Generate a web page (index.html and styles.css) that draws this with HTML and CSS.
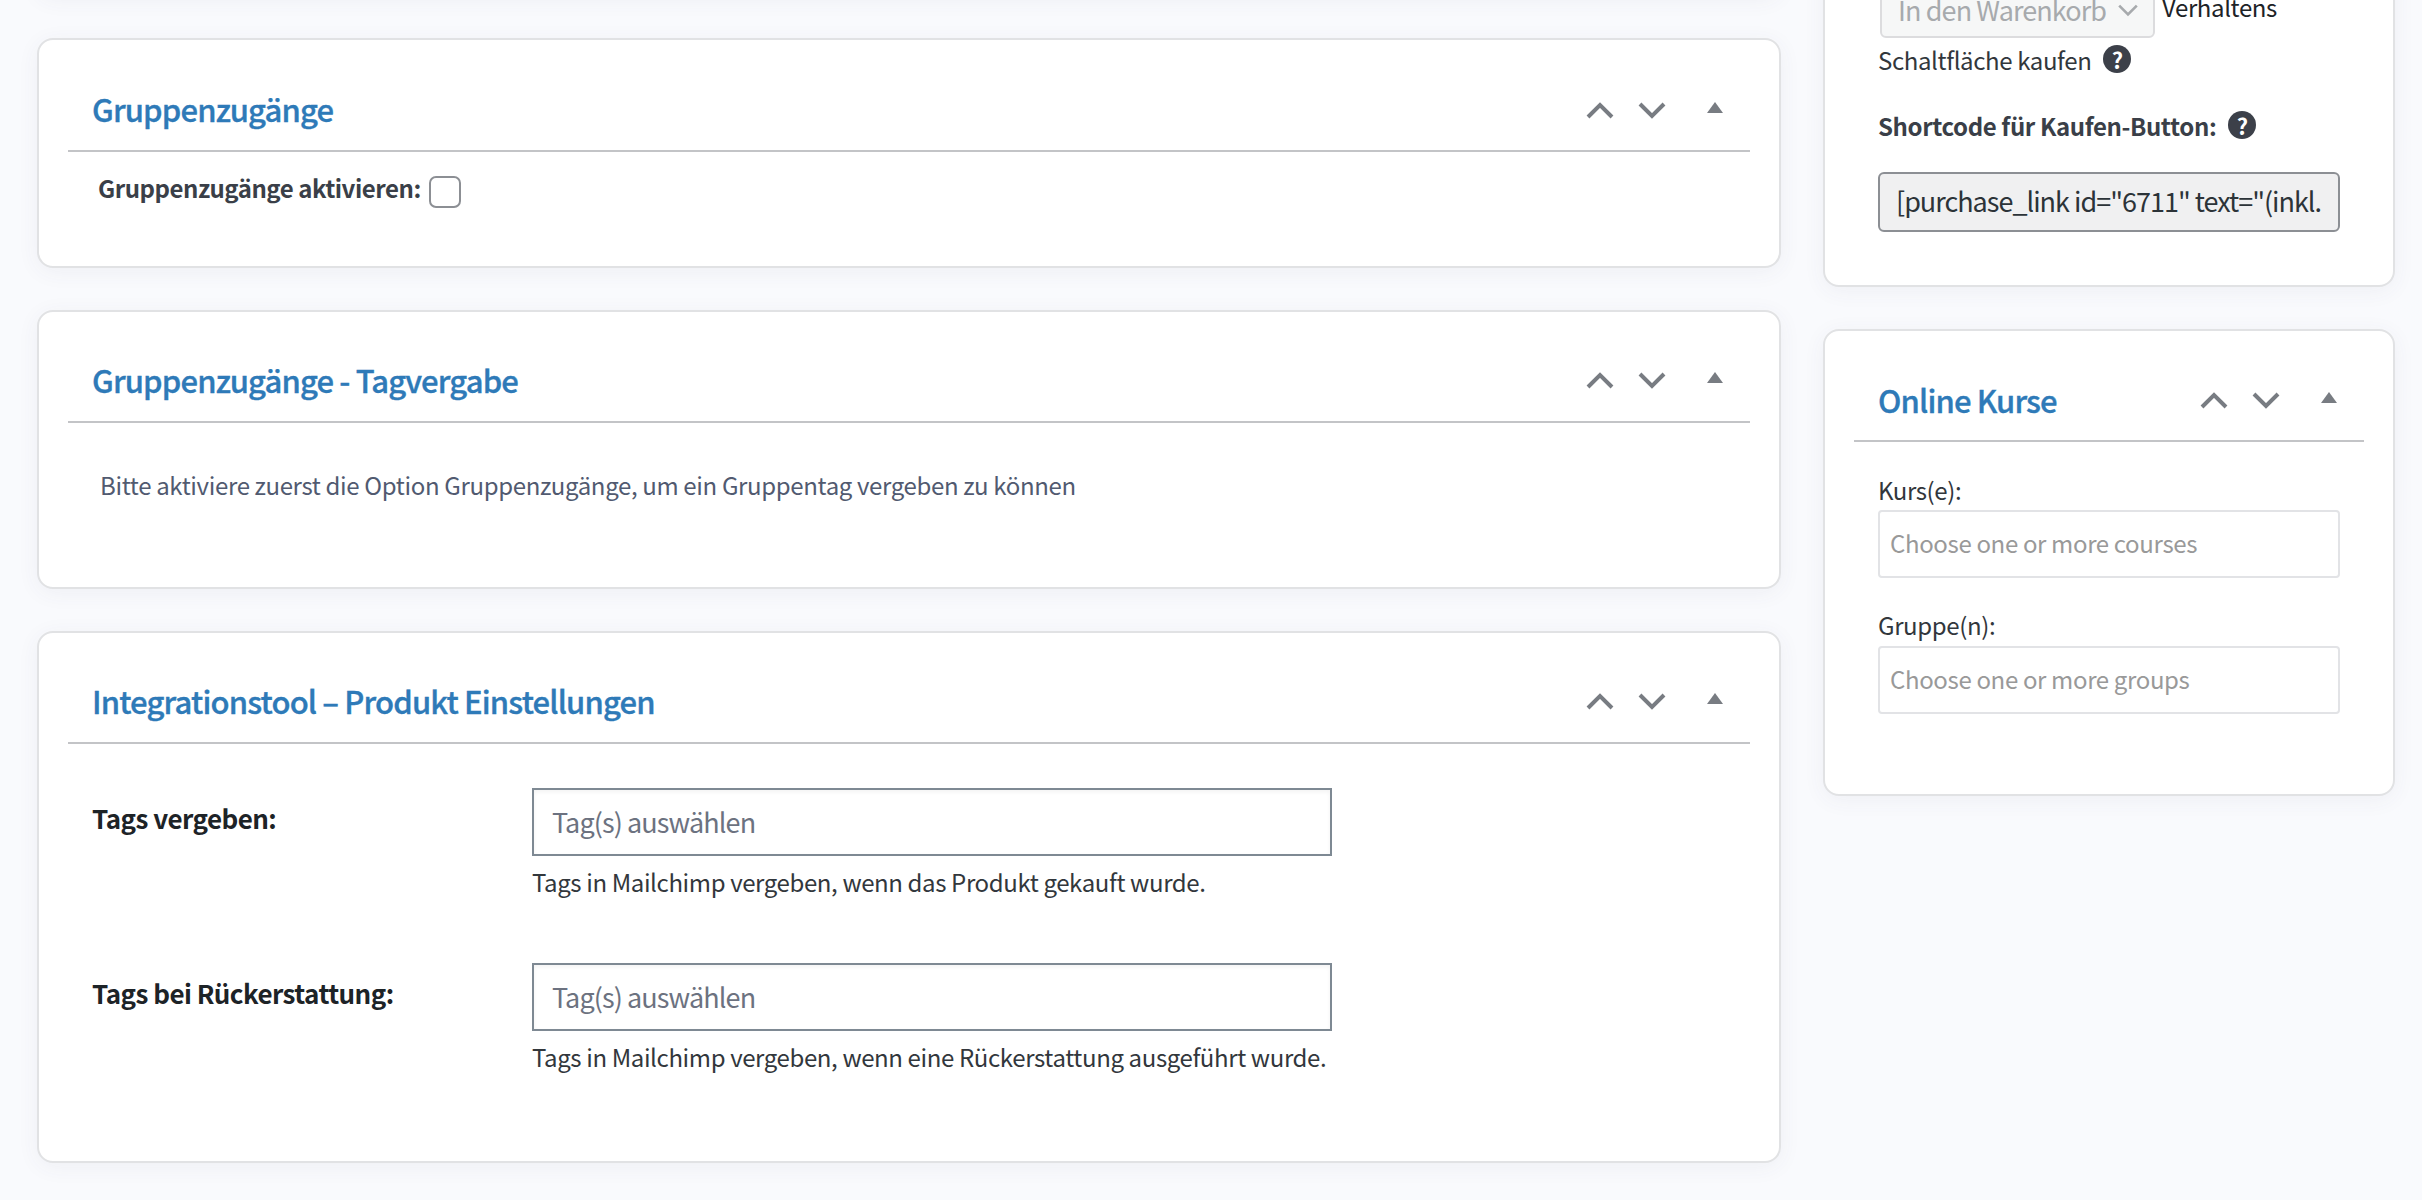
FILE: index.html
```html
<!DOCTYPE html>
<html lang="de">
<head>
<meta charset="utf-8">
<title>Produkt bearbeiten</title>
<link rel="stylesheet" href="styles.css">
</head>
<body>
<svg class="defs" width="0" height="0" aria-hidden="true">
  <symbol id="up" viewBox="0 0 28 17"><path d="M2 15 14 3l12 12" fill="none" stroke="currentColor" stroke-width="4"/></symbol>
  <symbol id="down" viewBox="0 0 28 17"><path d="M2 2l12 12L26 2" fill="none" stroke="currentColor" stroke-width="4"/></symbol>
  <symbol id="tri" viewBox="0 0 16 11"><path d="M8 0l8 11H0z" fill="currentColor"/></symbol>
</svg>
<main class="layout">
  <div class="col-main">
    <section class="card card-stub"></section>

    <section class="card card-access">
      <header class="card-head">
        <h2 class="card-title">Gruppenzugänge</h2>
        <div class="handles">
          <svg class="ico-chev"><use href="#up"/></svg>
          <svg class="ico-chev"><use href="#down"/></svg>
          <svg class="ico-tri"><use href="#tri"/></svg>
        </div>
      </header>
      <div class="access-row">
        <span class="access-label">Gruppenzugänge aktivieren:</span>
        <span class="checkbox"></span>
      </div>
    </section>

    <section class="card card-tag">
      <header class="card-head card-head-compact">
        <h2 class="card-title">Gruppenzugänge - Tagvergabe</h2>
        <div class="handles">
          <svg class="ico-chev"><use href="#up"/></svg>
          <svg class="ico-chev"><use href="#down"/></svg>
          <svg class="ico-tri"><use href="#tri"/></svg>
        </div>
      </header>
      <p class="tag-note">Bitte aktiviere zuerst die Option Gruppenzugänge, um ein Gruppentag vergeben zu können</p>
    </section>

    <section class="card card-integration">
      <header class="card-head card-head-compact">
        <h2 class="card-title">Integrationstool – Produkt Einstellungen</h2>
        <div class="handles">
          <svg class="ico-chev"><use href="#up"/></svg>
          <svg class="ico-chev"><use href="#down"/></svg>
          <svg class="ico-tri"><use href="#tri"/></svg>
        </div>
      </header>
      <div class="field-row">
        <div class="field-label">Tags vergeben:</div>
        <div class="field-control">
          <div class="tag-input">Tag(s) auswählen</div>
          <p class="field-help">Tags in Mailchimp vergeben, wenn das Produkt gekauft wurde.</p>
        </div>
      </div>
      <div class="field-row field-row-last">
        <div class="field-label">Tags bei Rückerstattung:</div>
        <div class="field-control">
          <div class="tag-input">Tag(s) auswählen</div>
          <p class="field-help">Tags in Mailchimp vergeben, wenn eine Rückerstattung ausgeführt wurde.</p>
        </div>
      </div>
    </section>
  </div>

  <aside class="col-side">
    <section class="card card-buy">
      <div class="select-row">
        <div class="select"><span class="select-text">In den Warenkorb</span>
          <svg class="select-arrow" viewBox="0 0 20 12"><path d="M2 2l8 8 8-8" fill="none" stroke="currentColor" stroke-width="2.4"/></svg>
        </div>
        <span class="select-after">Verhaltens</span>
      </div>
      <div class="help-line">Schaltfläche kaufen <span class="help">?</span></div>
      <div class="help-line help-line-strong"><strong>Shortcode für Kaufen-Button:</strong> <span class="help">?</span></div>
      <div class="shortcode"><span class="shortcode-text">[purchase_link id="6711" text="(inkl.</span></div>
    </section>

    <section class="card card-courses">
      <header class="card-head card-head-side">
        <h2 class="card-title">Online Kurse</h2>
        <div class="handles">
          <svg class="ico-chev"><use href="#up"/></svg>
          <svg class="ico-chev"><use href="#down"/></svg>
          <svg class="ico-tri"><use href="#tri"/></svg>
        </div>
      </header>
      <div class="course-label">Kurs(e):</div>
      <div class="course-input">Choose one or more courses</div>
      <div class="course-label course-label-next">Gruppe(n):</div>
      <div class="course-input">Choose one or more groups</div>
    </section>
  </aside>
</main>
</body>
</html>
```

FILE: styles.css
```css
* { box-sizing: border-box; }
html, body { margin: 0; height: 1200px; overflow: hidden; }
body {
  background: #f9fafd;
  font-family: "Noto Sans CJK SC", "Source Sans Pro", "Noto Sans", sans-serif;
  font-size: 24px;
  letter-spacing: -.38px;
  color: #32373c;
}
.defs { position: absolute; }
.layout {
  display: flex;
  gap: 42px;
  margin-top: -100px;
  padding-left: 37px;
}
.col-main { width: 1744px; display: flex; flex-direction: column; gap: 42px; }
.col-side { width: 572px; display: flex; flex-direction: column; gap: 42px; }
.card {
  background: #fff;
  border: 2px solid #e1e2e4;
  border-radius: 16px;
  box-shadow: 0 4px 22px rgba(60, 70, 110, .06);
}
.card-stub { height: 96px; }
.card-head {
  display: flex;
  align-items: center;
  justify-content: space-between;
  height: 112px;
  margin: 0 29px;
  padding: 28px 0 0 24px;
  border-bottom: 2px solid #c3c4c7;
}
.card-head-compact { height: 111px; padding-top: 27px; }
.card-head-side { height: 111px; }
.card-title {
  margin: 0;
  font-size: 31px;
  line-height: 40px;
  font-weight: 500;
  letter-spacing: -.85px;
  -webkit-text-stroke: .35px currentColor;
  color: #2e7ab8;
}
.handles {
  display: flex;
  align-items: flex-start;
  height: 36px;
  color: #787c82;
}
.ico-chev { width: 28px; height: 17px; margin-right: 24px; margin-top: 11px; }
.ico-tri { width: 16px; height: 11px; margin: 11px 27px 0 17px; }
.card-head-compact .ico-chev, .card-head-side .ico-chev { margin-top: 10px; }
.card-head-compact .ico-tri, .card-head-side .ico-tri { margin-top: 10px; }

.card-access { height: 230px; }
.access-row { display: flex; align-items: flex-start; padding: 23px 0 0 59px; }
.access-label { font-weight: 600; line-height: 34px; margin: -4px 8px 0 0; letter-spacing: -.46px; color: #3a3f48; }
.checkbox {
  width: 32px;
  height: 32px;
  margin-top: 1px;
  border: 2px solid #8c8f94;
  border-radius: 7px;
  background: #fff;
}

.card-tag { height: 279px; }
.tag-note { margin: 45px 0 0 61px; line-height: 34px; color: #515a70; letter-spacing: -.35px; }

.card-integration { height: 532px; }
.field-row { display: flex; padding: 44px 0 0 53px; }
.field-row-last { padding-top: 64px; }
.field-label { width: 440px; font-size: 26px; font-weight: 600; color: #1d2327; line-height: 34px; padding-top: 13px; letter-spacing: -.55px; }
.field-control { width: 800px; }
.tag-input {
  height: 68px;
  padding: 0 18px;
  border: 2px solid #7e8993;
  font-size: 27px;
  letter-spacing: -.9px;
  line-height: 64px;
  color: #6c7280;
  box-shadow: inset 0 2px 4px rgba(0, 0, 0, .05);
}
.field-help { margin: 9px 0 0; line-height: 34px; white-space: nowrap; }

.card-buy { height: 387px; padding-left: 53px; }
.select-row { display: flex; align-items: flex-start; height: 138px; }
.select {
  display: flex;
  align-items: center;
  justify-content: space-between;
  width: 275px;
  height: 56px;
  margin: 80px 0 0 2px;
  padding: 0 14px 0 16px;
  border: 2px solid #dcdcde;
  border-radius: 6px;
  background: #f6f7f7;
  color: #a7aaad;
  font-size: 27px;
  letter-spacing: -.9px;
  line-height: 40px;
}
.select-text { white-space: nowrap; }
.select-arrow { width: 22px; height: 14px; color: #a7aaad; }
.select-after { margin: 88px 0 0 7px; line-height: 34px; color: #1d2327; }
.help-line { display: flex; align-items: center; gap: 12px; height: 34px; margin-top: 2px; white-space: nowrap; }
.help-line-strong { margin-top: 32px; }
.help-line strong { font-weight: 600; letter-spacing: -.39px; color: #3a3f48; }
.help {
  display: inline-flex;
  align-items: center;
  justify-content: center;
  width: 28px;
  height: 28px;
  margin-top: -1px;
  border-radius: 50%;
  background: #3c4049;
  color: #fff;
  font-size: 22px;
  font-weight: 700;
  line-height: 1;
  letter-spacing: 0;
}
.shortcode {
  width: 462px;
  height: 60px;
  margin-top: 30px;
  padding: 0 16px;
  border: 2px solid #8c8f94;
  border-radius: 6px;
  background: #f0f0f1;
  color: #2c3338;
  font-size: 27px;
  letter-spacing: -1px;
  line-height: 54px;
}
.shortcode-text { display: block; overflow: hidden; white-space: nowrap; }

.card-courses { height: 467px; }
.course-label { margin: 31px 0 3px 53px; line-height: 34px; color: #32373c; }
.course-label-next { margin: 30px 0 4px 53px; }
.course-input {
  width: 462px;
  height: 68px;
  margin-left: 53px;
  padding: 0 10px;
  border: 2px solid #e2e3e6;
  border-radius: 4px;
  color: #999;
  letter-spacing: -.35px;
  line-height: 62px;
}
```
